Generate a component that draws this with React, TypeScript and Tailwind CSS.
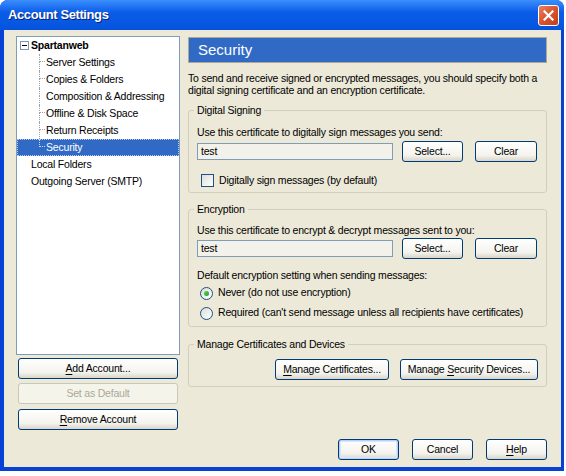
import React from 'react'

function XpButton({
  children,
  className = '',
  disabled = false,
  primary = false,
}: {
  children: React.ReactNode
  className?: string
  disabled?: boolean
  primary?: boolean
}) {
  return (
    <div
      className={`flex h-[21px] items-center justify-center rounded-[3px] border leading-none ${
        disabled
          ? 'border-[#c9c7ba] bg-[#f5f4ea] text-[#aca899]'
          : 'border-[#003c74] bg-linear-to-b from-white via-[#f4f3ee] via-70% to-[#d9d5c9] text-black'
      } ${primary ? 'shadow-[inset_0_0_0_1px_#b9d1f6,inset_0_0_0_2px_#d9e6fb]' : ''} ${className}`}
    >
      <span className="whitespace-pre">{children}</span>
    </div>
  )
}

function Mn({ children }: { children: React.ReactNode }) {
  return <span className="underline underline-offset-2">{children}</span>
}

function ChildRow({
  label,
  last = false,
  noDash = false,
  selected = false,
}: {
  label: string
  last?: boolean
  noDash?: boolean
  selected?: boolean
}) {
  const lineColor = selected ? 'border-[#c8d6f0]' : 'border-[#a0a0a0]'
  return (
    <div
      className={`flex h-[17px] items-stretch ${
        selected ? 'bg-[#316ac5] text-white outline outline-1 outline-dotted outline-offset-[-1px] outline-[#b8c9ea]' : 'text-black'
      }`}
    >
      <div className="w-[22px] shrink-0" />
      <div className="flex w-[6px] shrink-0 flex-col">
        <div className={`h-[8px] border-l border-dotted ${lineColor} ${noDash ? '' : 'border-b'}`} />
        {!last && <div className={`flex-1 border-l border-dotted ${lineColor}`} />}
      </div>
      <span className="ml-[1px] self-center whitespace-nowrap">{label}</span>
    </div>
  )
}

function Radio({ checked = false }: { checked?: boolean }) {
  return (
    <div className="flex h-[13px] w-[13px] shrink-0 items-center justify-center rounded-full border border-[#1c5180] bg-linear-to-br from-[#dcdcd7] to-white">
      {checked && <div className="h-[5px] w-[5px] rounded-full bg-linear-to-br from-[#55d451] to-[#21a121]" />}
    </div>
  )
}

export default function App() {
  return (
    <div className="h-[476px] w-[566px] overflow-hidden bg-white font-['Liberation_Sans',Arial,sans-serif] text-[10.5px] tracking-[-0.2px] text-black">
      <div className="flex h-[471px] w-[564px] flex-col rounded-t-[8px] bg-[#0841d8]">
        {/* title bar */}
        <div className="flex h-[30px] shrink-0 items-center rounded-t-[8px] bg-linear-to-b from-[#3b8efc] via-[#0a5de8] via-40% to-[#0553dd] pl-[8px] pr-[5px]">
          <span className="text-[13px] font-bold tracking-[-0.4px] text-white [text-shadow:1px_1px_0_#0a1f7a]">
            Account Settings
          </span>
          <div className="ml-auto flex h-[21px] w-[21px] items-center justify-center rounded-[3px] border border-white bg-linear-to-br from-[#e9805f] via-[#d9532e] to-[#c23d17]">
            <svg width="11" height="11" viewBox="0 0 11 11">
              <path d="M1.5 1.5 L9.5 9.5 M9.5 1.5 L1.5 9.5" stroke="white" strokeWidth="2.2" strokeLinecap="square" />
            </svg>
          </div>
        </div>

        {/* body */}
        <div className="mb-[4px] ml-[4px] mr-[3px] flex flex-1 bg-[#ece9d8] pl-[12px] pr-[14px] pt-[6px]">
          {/* left column */}
          <div className="flex w-[164px] shrink-0 flex-col">
            <div className="h-[319px] border border-[#7f9db9] bg-white">
              <div className="flex h-[17px] items-center pl-[3px]">
                <div className="flex h-[9px] w-[9px] items-center justify-center border border-[#7898b5] bg-white">
                  <div className="h-[1px] w-[5px] bg-black" />
                </div>
                <span className="ml-[2px] font-bold">Spartanweb</span>
              </div>
              <ChildRow label="Server Settings" />
              <ChildRow label="Copies & Folders" />
              <ChildRow label="Composition & Addressing" noDash />
              <ChildRow label="Offline & Disk Space" />
              <ChildRow label="Return Receipts" />
              <ChildRow label="Security" last selected />
              <div className="flex h-[17px] items-center pl-[14px]">Local Folders</div>
              <div className="flex h-[17px] items-center pl-[14px]">Outgoing Server (SMTP)</div>
            </div>
            <div className="mx-[2px] mt-[3px] flex flex-col gap-[4px]">
              <XpButton>
                <Mn>A</Mn>dd Account...
              </XpButton>
              <XpButton disabled>Set as Default</XpButton>
              <XpButton className="mt-[1px]">
                <Mn>R</Mn>emove Account
              </XpButton>
            </div>
          </div>

          {/* right column */}
          <div className="ml-[8px] flex w-[359px] shrink-0 flex-col">
            <div className="mt-[1px] flex h-[26px] items-center border border-[#aca899] bg-[#316ac5] pl-[9px]">
              <span className="text-[15px] tracking-normal text-white">Security</span>
            </div>
            <p className="mt-[9px] leading-[12px]">
              To send and receive signed or encrypted messages, you should specify both a digital signing certificate and
              an encryption certificate.
            </p>

            <fieldset className="mt-[8px] rounded-[3px] border border-[#d0d0bf]">
              <legend className="ml-[5px] px-[3px] leading-[13px]">Digital Signing</legend>
              <div className="px-[8px] pb-[5px] pt-[8px]">
                <div className="leading-[14px]">Use this certificate to digitally sign messages you send:</div>
                <div className="mt-[2px] flex h-[21px] items-center">
                  <div className="flex h-[17px] w-[196px] items-center border border-[#7f9db9] bg-[#f2f1ea] pl-[3px]">
                    test
                  </div>
                  <XpButton className="ml-[9px] w-[61px]">Select...</XpButton>
                  <XpButton className="ml-[12px] w-[62px]">Clear</XpButton>
                </div>
                <div className="mt-[12px] flex h-[13px] items-center pl-[4px]">
                  <div className="h-[13px] w-[13px] border border-[#1c5180] bg-linear-to-br from-[#dcdcd7] to-white" />
                  <span className="ml-[5px]">Digitally sign messages (by default)</span>
                </div>
              </div>
            </fieldset>

            <fieldset className="mt-[10px] rounded-[3px] border border-[#d0d0bf]">
              <legend className="ml-[5px] px-[3px] leading-[13px]">Encryption</legend>
              <div className="px-[8px] pb-[3px] pt-[7px]">
                <div className="leading-[14px]">Use this certificate to encrypt &amp; decrypt messages sent to you:</div>
                <div className="mt-[1px] flex h-[21px] items-center">
                  <div className="flex h-[17px] w-[196px] items-center border border-[#7f9db9] bg-[#f2f1ea] pl-[3px]">
                    test
                  </div>
                  <XpButton className="ml-[9px] w-[61px]">Select...</XpButton>
                  <XpButton className="ml-[12px] w-[62px]">Clear</XpButton>
                </div>
                <div className="mt-[9px] leading-[14px]">Default encryption setting when sending messages:</div>
                <div className="mt-[1px] flex h-[20px] items-center pl-[3px]">
                  <Radio checked />
                  <span className="ml-[5px]">Never (do not use encryption)</span>
                </div>
                <div className="flex h-[20px] items-center pl-[3px]">
                  <Radio />
                  <span className="ml-[5px] whitespace-nowrap">
                    Required (can't send message unless all recipients have certificates)
                  </span>
                </div>
              </div>
            </fieldset>

            <fieldset className="mt-[11px] rounded-[3px] border border-[#d0d0bf]">
              <legend className="ml-[5px] px-[3px] leading-[13px]">Manage Certificates and Devices</legend>
              <div className="flex justify-end px-[8px] pb-[6px] pt-[8px]">
                <XpButton className="w-[114px]">
                  <Mn>M</Mn>anage Certificates...
                </XpButton>
                <XpButton className="ml-[11px] w-[138px]">
                  Manage <Mn>S</Mn>ecurity Devices...
                </XpButton>
              </div>
            </fieldset>

            <div className="mb-[7px] mt-auto flex justify-end gap-[13px]">
              <XpButton primary className="w-[61px]">
                OK
              </XpButton>
              <XpButton className="w-[61px]">Cancel</XpButton>
              <XpButton className="w-[61px]">
                <Mn>H</Mn>elp
              </XpButton>
            </div>
          </div>
        </div>
      </div>
    </div>
  )
}
